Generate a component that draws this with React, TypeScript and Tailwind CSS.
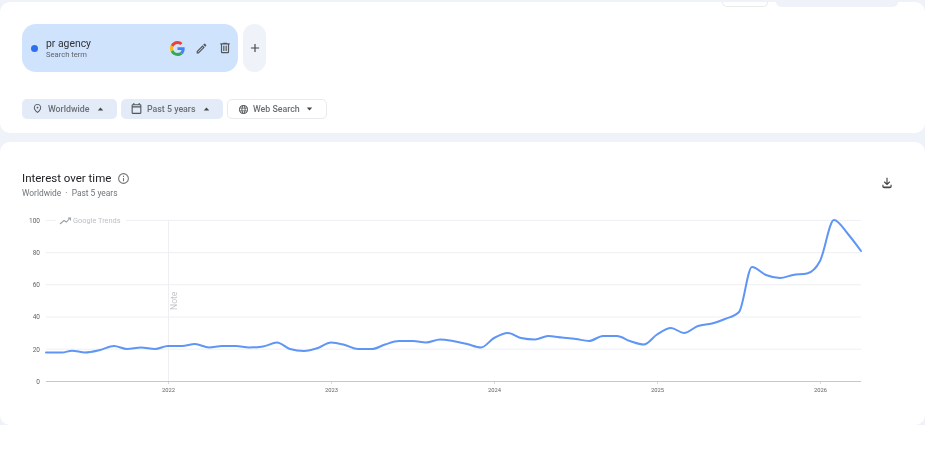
import React from "react";

const pts: [number, number][] = [
  [46,352.5],[62,352.5],[72,350.7],[85,352.5],[100,350],[114,346],[127,349],[141,347.5],[155,349],[168,346],[182,346],[195,344],[209,347.5],[222,346],[236,346],[249,347.5],[263,346.5],[277,342.5],[290,349],[304,351],[318,348],[331,342.5],
  [345,345],[358,349],[372,349],[385,344.5],[399,341],[413,341],[426,342.5],[440,339.5],[453,341],[467,344],[481,347.5],[494,338],[508,333],[521,338],[535,339.5],[548,336],[562,337.5],[576,339],[589,341],[603,336],[617,336],[630,341],[644,344.5],
  [657,334.5],[671,328],[684,333],[698,326],[712,323.5],[725,319],[739,312],[752,267],[766,275],[780,278],[793,275],[807,273.5],[820,261],[834,220],[848,234],[861,251],
];

function smooth(p: [number, number][]): string {
  const n = p.length;
  const sl: number[] = [];
  for (let i = 0; i < n - 1; i++) sl.push((p[i + 1][1] - p[i][1]) / (p[i + 1][0] - p[i][0]));
  const m: number[] = [sl[0]];
  for (let i = 1; i < n - 1; i++) {
    if (sl[i - 1] * sl[i] <= 0) {
      m.push(0);
    } else {
      const h0 = p[i][0] - p[i - 1][0];
      const h1 = p[i + 1][0] - p[i][0];
      const avg = (sl[i - 1] * h1 + sl[i] * h0) / (h0 + h1);
      const lim = 2 * Math.min(Math.abs(sl[i - 1]), Math.abs(sl[i]));
      m.push(Math.sign(avg) * Math.min(Math.abs(avg), lim));
    }
  }
  m.push(sl[n - 2]);
  let d = `M${p[0][0]} ${p[0][1]}`;
  for (let i = 0; i < n - 1; i++) {
    const h = (p[i + 1][0] - p[i][0]) / 3;
    d += ` C${p[i][0] + h} ${p[i][1] + m[i] * h} ${p[i + 1][0] - h} ${p[i + 1][1] - m[i + 1] * h} ${p[i + 1][0]} ${p[i + 1][1]}`;
  }
  return d;
}

const font = { fontFamily: "Roboto, sans-serif" };

function Caret({ up }: { up: boolean }) {
  return (
    <svg width="7" height="4" viewBox="0 0 7 4" className="shrink-0">
      <path d={up ? "M.8 3.6 L3.5 .6 L6.2 3.6Z" : "M.8 .4 L3.5 3.4 L6.2 .4Z"} fill="#444746" />
    </svg>
  );
}

function Chip({ icon, label, active, w, up }: { icon: React.ReactNode; label: string; active: boolean; w: string; up: boolean }) {
  return (
    <div className={`${w} h-[20px] rounded-[5px] flex items-center text-[8.8px] font-medium text-[#6a6f74] ${active ? "bg-[#e3eaf8]" : "bg-white border border-[#e8eaed]"}`}>
      {icon}
      <span className="whitespace-nowrap pt-[1px]">{label}</span>
      <span className="ml-auto flex">
        <Caret up={up} />
      </span>
    </div>
  );
}

export default function App() {
  return (
    <div className="w-[925px] h-[451px] overflow-hidden bg-white blur-[0.5px] font-['Roboto',sans-serif]">
      <div className="bg-[#eff3f9] pt-[2px] h-[142px]">
        <div className="h-[131px] bg-white rounded-[10px]">
          <div className="h-[5px] flex justify-end items-start pr-[27px] gap-[8px]">
            <div className="w-[46px] h-[5px] bg-white border border-t-0 border-[#e8eaed] rounded-b-[8px]" />
            <div className="w-[122px] h-[5px] bg-[#eff3f9] rounded-b-[8px]" />
          </div>
          <div className="pl-[22px] pt-[17px] flex gap-[5px]">
            <div className="w-[216px] h-[48px] rounded-[14px] bg-[#d0e3fd] flex items-center pl-[9px] pr-[6px]">
              <span className="w-[7px] h-[7px] rounded-full bg-[#2f6fed] shrink-0" />
              <div className="ml-[8px] pt-[1px] flex flex-col">
                <span className="text-[10.4px] leading-[12px] text-[#303336]">pr agency</span>
                <span className="text-[7.6px] leading-[10px] text-[#5f6368]">Search term</span>
              </div>
              <div className="ml-auto flex items-center gap-[10px]">
                <svg width="15" height="15" viewBox="0 0 48 48">
                  <path fill="#EA4335" d="M24 9.5c3.54 0 6.71 1.22 9.21 3.6l6.85-6.85C35.9 2.38 30.47 0 24 0 14.62 0 6.51 5.38 2.56 13.22l7.98 6.19C12.43 13.72 17.74 9.5 24 9.5z" />
                  <path fill="#4285F4" d="M46.98 24.55c0-1.57-.15-3.09-.38-4.55H24v9.02h12.94c-.58 2.96-2.26 5.48-4.78 7.18l7.73 6c4.51-4.18 7.09-10.36 7.09-17.65z" />
                  <path fill="#FBBC05" d="M10.53 28.59c-.48-1.45-.76-2.99-.76-4.59s.27-3.14.76-4.59l-7.98-6.19C.92 16.46 0 20.12 0 24c0 3.88.92 7.54 2.56 10.78l7.97-6.19z" />
                  <path fill="#34A853" d="M24 48c6.48 0 11.93-2.13 15.89-5.81l-7.73-6c-2.15 1.45-4.92 2.3-8.16 2.3-6.26 0-11.57-4.22-13.47-9.91l-7.98 6.19C6.51 42.62 14.62 48 24 48z" />
                </svg>
                <svg width="13" height="13" viewBox="0 0 24 24" fill="#50565a">
                  <path d="M3 17.25V21h3.75L17.81 9.94l-3.75-3.75L3 17.25zM5.92 19H5v-.92l9.06-9.06.92.92L5.92 19zM20.71 7.04a1 1 0 0 0 0-1.41l-2.34-2.34a1 1 0 0 0-1.41 0l-1.83 1.83 3.75 3.75 1.83-1.83z" />
                </svg>
                <svg width="14" height="14" viewBox="0 0 24 24" fill="#50565a">
                  <path d="M15 4V3H9v1H4v2h1v13a2 2 0 0 0 2 2h10a2 2 0 0 0 2-2V6h1V4h-5zm2 15H7V6h10v13zM9 8h2v9H9V8zm4 0h2v9h-2V8z" />
                </svg>
              </div>
            </div>
            <div className="w-[23px] h-[48px] rounded-[12px] bg-[#eff3f9] flex items-center justify-center">
              <svg width="14" height="14" viewBox="0 0 24 24" fill="#444746">
                <path d="M19 13h-6v6h-2v-6H5v-2h6V5h2v6h6v2z" />
              </svg>
            </div>
          </div>
          <div className="pl-[22px] pt-[27px] flex gap-[4px]">
            <Chip
              w="w-[95px] pl-[10px] pr-[13px]"
              label="Worldwide"
              active
              up
              icon={
                <svg width="11" height="11" viewBox="0 0 24 24" fill="#50565a" className="mr-[5px] -mt-[1px]">
                  <path d="M12 12a2 2 0 1 0 0-4 2 2 0 0 0 0 4zm0-10c4.2 0 8 3.22 8 8.2 0 3.32-2.67 7.25-8 11.8-5.33-4.55-8-8.48-8-11.8C4 5.22 7.8 2 12 2zm6 8.2C18 6.57 15.35 4 12 4s-6 2.57-6 6.2c0 2.34 1.95 5.44 6 9.14 4.05-3.7 6-6.8 6-9.14z" />
                </svg>
              }
            />
            <Chip
              w="w-[102px] pl-[9px] pr-[13px]"
              label="Past 5 years"
              active
              up
              icon={
                <svg width="13" height="13" viewBox="0 0 24 24" fill="#50565a" className="mr-[4px] -mt-[1px]">
                  <path d="M19 4h-1V2h-2v2H8V2H6v2H5a2 2 0 0 0-2 2v14a2 2 0 0 0 2 2h14a2 2 0 0 0 2-2V6a2 2 0 0 0-2-2zm0 16H5V10h14v10zm0-12H5V6h14v2z" />
                </svg>
              }
            />
            <Chip
              w="w-[100px] pl-[10px] pr-[13px]"
              label="Web Search"
              active={false}
              up={false}
              icon={
                <svg width="11" height="11" viewBox="0 0 24 24" fill="#50565a" className="mr-[4px]">
                  <path d="M12 2a10 10 0 1 0 0 20 10 10 0 0 0 0-20zm6.9 6h-2.95a15.6 15.6 0 0 0-1.38-3.56A8 8 0 0 1 18.9 8zM12 4.04c.83 1.2 1.48 2.53 1.91 3.96h-3.82A13.9 13.9 0 0 1 12 4.04zM4.26 14a8.2 8.2 0 0 1 0-4h3.38a16.5 16.5 0 0 0 0 4H4.26zm.82 2h2.95c.32 1.25.78 2.45 1.38 3.56A8 8 0 0 1 5.08 16zm2.95-8H5.08a8 8 0 0 1 4.33-3.56A15.6 15.6 0 0 0 8.03 8zM12 19.96A13.9 13.9 0 0 1 10.09 16h3.82A13.9 13.9 0 0 1 12 19.96zM14.34 14H9.66a14.7 14.7 0 0 1 0-4h4.68a14.7 14.7 0 0 1 0 4zm.25 5.56c.6-1.11 1.06-2.31 1.38-3.56h2.95a8 8 0 0 1-4.33 3.56zM16.36 14a16.5 16.5 0 0 0 0-4h3.38a8.2 8.2 0 0 1 0 4h-3.38z" />
                </svg>
              }
            />
          </div>
        </div>
      </div>

      <div className="bg-[#eff3f9] h-[283px]">
        <div className="h-[283px] bg-white rounded-[10px]">
          <div className="flex justify-between pl-[22px] pr-[31px] pt-[28px] h-[63px]">
            <div>
              <div className="flex items-center gap-[6px]">
                <span className="text-[11.5px] leading-[16px] font-normal text-[#202124]">Interest over time</span>
                <svg width="13" height="13" viewBox="0 0 24 24" fill="#70757a">
                  <path d="M11 7h2v2h-2V7zm0 4h2v6h-2v-6zm1-9a10 10 0 1 0 0 20 10 10 0 0 0 0-20zm0 18a8 8 0 1 1 0-16 8 8 0 0 1 0 16z" />
                </svg>
              </div>
              <div className="text-[8.4px] leading-[12px] mt-[1px] text-[#70757a]">Worldwide &nbsp;·&nbsp; Past 5 years</div>
            </div>
            <svg width="14" height="14" viewBox="0 0 24 24" fill="#444746" className="mt-[6px]">
              <path d="M12 16 6.5 10.5 8 9l3 3V3h2v9l3-3 1.5 1.5L12 16zM4 15h2v3h12v-3h2v3a3 3 0 0 1-3 3H7a3 3 0 0 1-3-3v-3z" />
            </svg>
          </div>
          <svg width="925" height="220" viewBox="0 205 925 220" className="block" style={font}>
            {[100, 80, 60, 40, 20].map((v) => {
              const y = 381 - v * 1.61;
              return (
                <line key={v} x1={46} x2={861} y1={y + 0.4} y2={y + 0.4} stroke="#ebedf0" strokeWidth="0.9" />
              );
            })}
            <rect x="56" y="214" width="70" height="12" fill="#fff" />
            <line x1="168.5" x2="168.5" y1="220" y2="381" stroke="#ebedf0" strokeWidth="0.9" />
            <path d="M60 224 L64 220.5 L66.5 222 L70 218 M68 218 H70.5 V220.5" fill="none" stroke="#9aa0a6" strokeWidth="1.1" />
            <text x="73" y="223.4" fontSize="7.4" fill="#bdc1c6">Google Trends</text>
            <text x="0" y="0" fontSize="8.6" fill="#c4c7cb" transform="translate(177 310) rotate(-90)">Note</text>
            {[100, 80, 60, 40, 20, 0].map((v) => (
              <text key={v} x="40" y={383.8 - v * 1.61} fontSize="6.5" fill="#5f6368" textAnchor="end">{v}</text>
            ))}
            <line x1="46" x2="861" y1="381.5" y2="381.5" stroke="#bdc1c6" strokeWidth="0.9" />
            {[[168.5, "2022"], [331.5, "2023"], [494.5, "2024"], [657.5, "2025"], [820.5, "2026"]].map(([x, t]) => (
              <g key={t as string}>
                <line x1={x as number} x2={x as number} y1="381" y2="384" stroke="#bdc1c6" strokeWidth="0.6" />
                <text x={x as number} y="391.8" fontSize="5.8" fill="#5f6368" textAnchor="middle">{t}</text>
              </g>
            ))}
            <path d={smooth(pts)} fill="none" stroke="#5f95f5" strokeWidth="2" strokeLinejoin="round" strokeLinecap="round" />
          </svg>
        </div>
      </div>
    </div>
  );
}
